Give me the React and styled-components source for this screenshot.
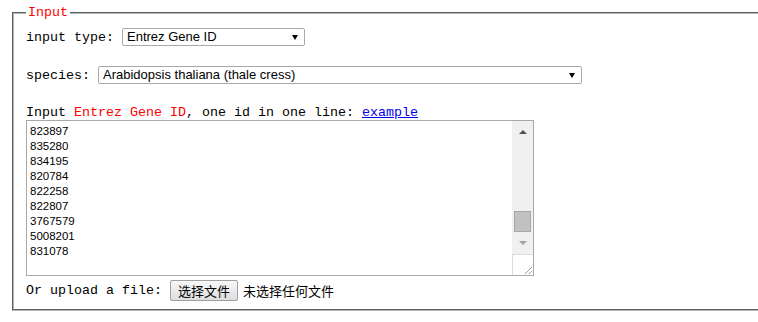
import React from 'react';
import styled, { createGlobalStyle } from 'styled-components';

const Global = createGlobalStyle`
  html, body { margin: 0; padding: 0; background: #fff; overflow: hidden; }
  body { font-family: "Liberation Mono", "Courier New", monospace; font-size: 13.33px; color: #000; }
`;

const Page = styled.div`
  padding: 5px 0 0 12px;
`;

const Fieldset = styled.fieldset`
  margin: 0;
  width: 780px;
  min-width: 0;
  box-sizing: border-box;
  border: 2px groove #b4b4b4;
  padding: 0 0 8px 12px;
`;

const Legend = styled.legend`
  color: #f00;
  padding: 0 2px;
  line-height: 15px;
  font-family: "Liberation Mono", monospace;
  font-size: 13.33px;
`;

const Row = styled.div`
  display: flex;
  align-items: center;
  gap: ${p => p.$gap || 8}px;
  height: ${p => p.$h || 18}px;
  margin-top: ${p => p.$mt || 0}px;
  line-height: 15px;
`;

const Label = styled.span`
  white-space: pre;
`;

const SelectBox = styled.div`
  position: relative;
  width: ${p => p.$w}px;
  height: 18px;
  box-sizing: border-box;
  border: 1px solid #a9a9a9;
  border-radius: 2px;
  background: #fff;
`;

const NativeSelect = styled.select`
  appearance: none;
  -webkit-appearance: none;
  border: none;
  outline: none;
  background: transparent;
  width: 100%;
  height: 100%;
  padding: 0 0 0 4px;
  margin: 0;
  font-family: "Liberation Sans", Arial, sans-serif;
  font-size: 13px;
  color: #000;
  line-height: 16px;
`;

const Arrow = styled.span`
  position: absolute;
  right: 6px;
  top: 6px;
  width: 0;
  height: 0;
  border-left: 3.5px solid transparent;
  border-right: 3.5px solid transparent;
  border-top: 5px solid #000;
  pointer-events: none;
`;

const TextLine = styled.div`
  margin-top: 21px;
  line-height: 15px;
  height: 15px;
  white-space: pre;
`;

const Red = styled.span`
  color: #f00;
`;

const Link = styled.a`
  color: #0000ee;
  text-decoration: underline;
`;

const TextBox = styled.div`
  display: flex;
  width: 508px;
  height: 156px;
  box-sizing: border-box;
  border: 1px solid #a9a9a9;
  background: #fff;
`;

const Lines = styled.div`
  flex: 1;
  padding: 3px 0 0 3px;
  font-family: "Liberation Sans", Arial, sans-serif;
  font-size: 11.5px;
  line-height: 15px;
  color: #000;
`;

const ScrollCol = styled.div`
  width: 21px;
  display: flex;
  flex-direction: column;
`;

const Track = styled.div`
  flex: 1;
  background: #f0f0f0;
  display: flex;
  flex-direction: column;
  align-items: center;
  padding-top: 9px;
  box-sizing: border-box;
`;

const UpArrow = styled.span`
  width: 0;
  height: 0;
  border-left: 4px solid transparent;
  border-right: 4px solid transparent;
  border-bottom: 4px solid #505050;
`;

const DownArrow = styled.span`
  width: 0;
  height: 0;
  border-left: 4px solid transparent;
  border-right: 4px solid transparent;
  border-top: 4px solid #a3a3a3;
  margin-top: 9px;
`;

const Thumb = styled.div`
  width: 17px;
  height: 21px;
  box-sizing: border-box;
  background: #c1c1c1;
  border: 1px solid #a8a8a8;
  margin-top: 77px;
`;

const Corner = styled.div`
  height: 21px;
  box-sizing: border-box;
  border-top: 1px solid #dcdcdc;
  border-left: 1px solid #dcdcdc;
  background: #fff;
  display: flex;
  align-items: flex-end;
  justify-content: flex-end;
`;

const FileButton = styled.button`
  height: 21px;
  margin: 0;
  padding: 0 7px;
  box-sizing: border-box;
  border: 1px solid #a0a0a0;
  border-radius: 2px;
  background: linear-gradient(#f7f7f7, #dedede);
  font-family: "Noto Sans CJK SC", sans-serif;
  font-size: 13px;
  line-height: 19px;
  color: #000;
`;

const FileNote = styled.span`
  font-family: "Noto Sans CJK SC", sans-serif;
  font-size: 13px;
  margin-left: -3px;
`;

const ids = ['823897', '835280', '834195', '820784', '822258', '822807', '3767579', '5008201', '831078'];

export default function App() {
  return (
    <Page>
      <Global />
      <Fieldset>
        <Legend>Input</Legend>
        <Row $mt={8}>
          <Label>input type:</Label>
          <SelectBox $w={183}>
            <NativeSelect defaultValue="entrez">
              <option value="entrez">Entrez Gene ID</option>
            </NativeSelect>
            <Arrow />
          </SelectBox>
        </Row>
        <Row $mt={20}>
          <Label>species:</Label>
          <SelectBox $w={484}>
            <NativeSelect defaultValue="ath">
              <option value="ath">Arabidopsis thaliana (thale cress)</option>
            </NativeSelect>
            <Arrow />
          </SelectBox>
        </Row>
        <TextLine>
          Input <Red>Entrez Gene ID</Red>, one id in one line: <Link href="#">example</Link>
        </TextLine>
        <TextBox>
          <Lines>
            {ids.map(id => (
              <div key={id}>{id}</div>
            ))}
          </Lines>
          <ScrollCol>
            <Track>
              <UpArrow />
              <Thumb />
              <DownArrow />
            </Track>
            <Corner>
              <svg width="10" height="10" viewBox="0 0 10 10">
                <line x1="9" y1="2" x2="2" y2="9" stroke="#999" strokeWidth="1" />
                <line x1="9" y1="6" x2="6" y2="9" stroke="#999" strokeWidth="1" />
              </svg>
            </Corner>
          </ScrollCol>
        </TextBox>
        <Row $mt={3} $h={22}>
          <Label>Or upload a file:</Label>
          <FileButton type="button">选择文件</FileButton>
          <FileNote>未选择任何文件</FileNote>
        </Row>
      </Fieldset>
    </Page>
  );
}
